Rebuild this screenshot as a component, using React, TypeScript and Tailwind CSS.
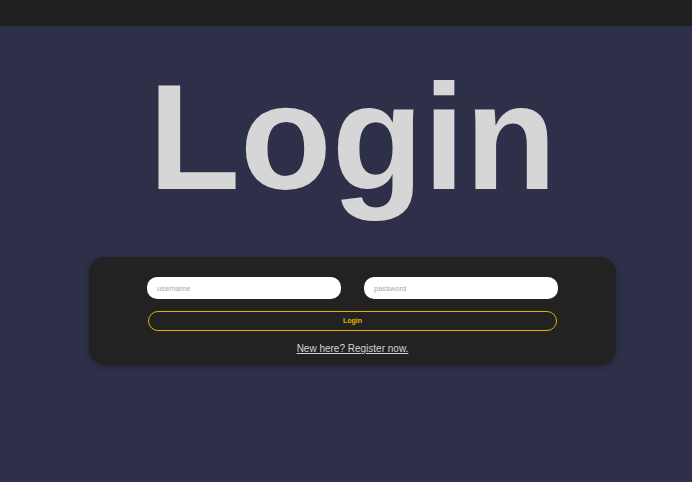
export default function App() {
  return (
    <div className="min-h-[482px] w-full bg-[#2e3049] font-['Liberation_Sans',Arial,sans-serif]">
      {/* top bar */}
      <div className="h-[26px] w-full bg-[#202020]" />

      <div className="ml-[89px] w-[527px] pt-[36px]">
        <h1 className="text-center text-[150px] font-bold leading-none text-[#d6d6d6]">Login</h1>

        <div className="mt-[45px] rounded-[16px] bg-[#222222] px-[58px] pt-[20px] pb-[10px] shadow-[0_2px_6px_rgba(0,0,0,0.25)]">
          <div className="flex gap-[23px]">
            <input
              className="h-[22px] w-[194px] rounded-[10px] bg-white px-[10px] text-[7.5px] text-gray-700 outline-none placeholder:text-[#a8a8a8]"
              placeholder="username"
            />
            <input
              type="password"
              className="h-[22px] w-[194px] rounded-[10px] bg-white px-[10px] text-[7.5px] text-gray-700 outline-none placeholder:text-[#a8a8a8]"
              placeholder="password"
            />
          </div>
          <button className="mx-px mt-[12px] flex h-[20px] w-[409px] items-center justify-center rounded-full border border-[#e0b400] text-[7px] font-bold text-[#e0b400]">
            Login
          </button>
          <div className="mt-[12px] text-center text-[10px] leading-[12px]">
            <a href="#" className="text-[#d4d4d4] underline">New here? Register now.</a>
          </div>
        </div>
      </div>
    </div>
  );
}
